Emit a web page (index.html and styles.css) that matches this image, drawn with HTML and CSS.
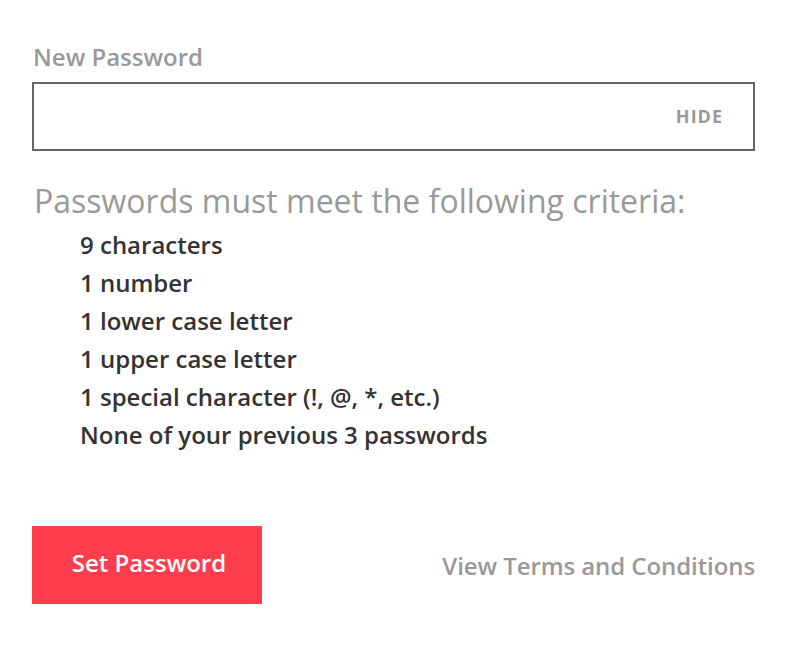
FILE: index.html
```html
<!DOCTYPE html>
<html>
<head>
<meta charset="utf-8">
<link rel="stylesheet" href="styles.css">
</head>
<body>
<main class="form">
  <label class="label" for="pw">New Password</label>
  <div class="field">
    <input id="pw" class="input" type="password">
    <span class="toggle">HIDE</span>
  </div>
  <h2 class="criteria-title">Passwords must meet the following criteria:</h2>
  <ul class="criteria">
    <li>9 characters</li>
    <li>1 number</li>
    <li>1 lower case letter</li>
    <li>1 upper case letter</li>
    <li>1 special character (!, @, *, etc.)</li>
    <li>None of your previous 3 passwords</li>
  </ul>
  <div class="actions">
    <button class="btn">Set Password</button>
    <a class="terms" href="#">View Terms and Conditions</a>
  </div>
</main>
</body>
</html>
```
FILE: styles.css
```css
html, body {
  margin: 0;
  padding: 0;
  background: #fff;
  font-family: "Open Sans", "Liberation Sans", sans-serif;
}
.form {
  width: 723px;
  padding: 42px 0 0 32px;
  display: flex;
  flex-direction: column;
}
.label {
  font-size: 24px;
  font-weight: 600;
  color: #999;
  line-height: 30px;
  padding-left: 1px;
}
.field {
  margin-top: 10px;
  height: 69px;
  box-sizing: border-box;
  border: 2px solid #666;
  display: flex;
  align-items: center;
  padding: 0 30px 2px 16px;
}
.input {
  flex: 1;
  border: 0;
  outline: 0;
  font: inherit;
  font-size: 20px;
  background: transparent;
}
.toggle {
  font-size: 18px;
  font-weight: 700;
  color: #999;
  letter-spacing: 1px;
}
.criteria-title {
  margin: 30px 0 0 2px;
  font-size: 32px;
  font-weight: 400;
  color: #999;
  line-height: 40px;
}
.criteria {
  list-style: none;
  margin: 5px 0 0;
  padding: 0 0 0 48px;
}
.criteria li {
  font-size: 24px;
  font-weight: 600;
  color: #333;
  line-height: 38px;
}
.actions {
  margin-top: 72px;
  display: flex;
  justify-content: space-between;
  align-items: center;
}
.btn {
  width: 230px;
  height: 78px;
  border: 0;
  padding: 0 0 6px 4px;
  background: #ff3d4d;
  color: #fff;
  font: inherit;
  font-size: 24px;
  font-weight: 600;
}
.terms {
  font-size: 24px;
  font-weight: 600;
  color: #999;
  text-decoration: none;
  letter-spacing: -0.08px;
}
```
